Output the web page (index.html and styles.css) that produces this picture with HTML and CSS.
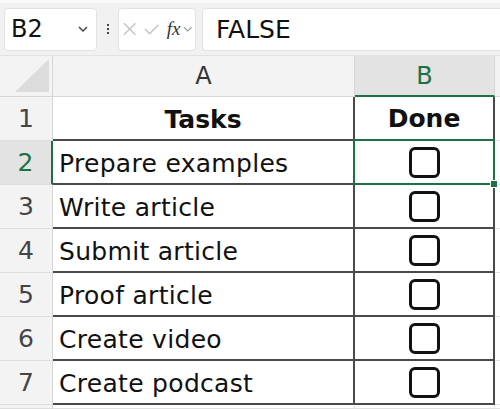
FILE: index.html
```html
<!DOCTYPE html>
<html lang="en">
<head>
  <meta charset="UTF-8">
  <title>Tasks sheet</title>
  <link rel="stylesheet" href="styles.css">
</head>
<body>
  <div class="toolbar">
    <div class="name-box">
      <span>B2</span>
      <svg class="chev" width="12" height="8" viewBox="0 0 12 8"><path d="M2 2 L6 6 L10 2" fill="none" stroke="#444" stroke-width="1.5"/></svg>
    </div>
    <div class="dots"><i></i><i></i><i></i></div>
    <div class="fx-box">
      <svg width="14" height="14" viewBox="0 0 14 14"><path d="M1 1 L13 13 M13 1 L1 13" stroke="#c4c4c4" stroke-width="1.5"/></svg>
      <svg width="16" height="13" viewBox="0 0 16 13"><path d="M1 6 L6 11 L15 1.5" fill="none" stroke="#c4c4c4" stroke-width="1.5"/></svg>
      <span class="fx">fx</span>
      <svg width="10" height="8" viewBox="0 0 10 8"><path d="M1 2 L5 6 L9 2" fill="none" stroke="#999" stroke-width="1.3"/></svg>
    </div>
    <div class="formula">FALSE</div>
  </div>

  <div class="sheet">
    <div class="corner"><span class="tri"></span></div>
    <div class="col-head">A</div>
    <div class="col-head active">B</div>
    <div class="col-rest"></div>

    <div class="row-head">1</div>
    <div class="cell title">Tasks</div>
    <div class="cell center title">Done</div>
    <div class="rest"></div>

    <div class="row-head active">2</div>
    <div class="cell">Prepare examples</div>
    <div class="cell center selected"><span class="box"></span><span class="handle"></span></div>
    <div class="rest"></div>

    <div class="row-head">3</div>
    <div class="cell">Write article</div>
    <div class="cell center"><span class="box"></span></div>
    <div class="rest"></div>

    <div class="row-head">4</div>
    <div class="cell">Submit article</div>
    <div class="cell center"><span class="box"></span></div>
    <div class="rest"></div>

    <div class="row-head">5</div>
    <div class="cell">Proof article</div>
    <div class="cell center"><span class="box"></span></div>
    <div class="rest"></div>

    <div class="row-head">6</div>
    <div class="cell">Create video</div>
    <div class="cell center"><span class="box"></span></div>
    <div class="rest"></div>

    <div class="row-head">7</div>
    <div class="cell">Create podcast</div>
    <div class="cell center"><span class="box"></span></div>
    <div class="rest"></div>

    <div class="row-head"></div>
    <div class="cell empty"></div>
    <div class="cell empty"></div>
    <div class="rest"></div>
  </div>
</body>
</html>
```

FILE: styles.css
```css
body {
  margin: 0;
  padding: 0;
  height: 409px;
  background-color: #ffffff;
  font-family: "DejaVu Sans", "Noto Sans", sans-serif;
  color: #111;
  overflow: hidden;
}

/* Barra de fórmulas */
.toolbar {
  display: flex;
  align-items: center;
  height: 56px;
  padding: 0 0 0 4px;
  box-sizing: border-box;
  background-color: #f1f1f1;
  border-top: 3px solid #fafafa;
  border-bottom: 1px solid #e2e2e2;
}

.name-box {
  display: flex;
  align-items: center;
  justify-content: space-between;
  width: 93px;
  height: 43px;
  box-sizing: border-box;
  padding: 0 7px 0 6px;
  background-color: #fff;
  border: 1px solid #e2e2e2;
  border-radius: 4px;
  font-size: 24px;
}

.dots {
  display: flex;
  flex-direction: column;
  gap: 2px;
  width: 21px;
  align-items: center;
}

.dots i {
  width: 2px;
  height: 2px;
  background-color: #444;
}

.fx-box {
  display: flex;
  align-items: center;
  gap: 8px;
  width: 78px;
  height: 43px;
  box-sizing: border-box;
  padding: 0 2px 0 4px;
  background-color: #fff;
  border: 1px solid #e2e2e2;
  border-radius: 4px;
}

.fx {
  font-family: "Liberation Serif", serif;
  font-style: italic;
  font-size: 19px;
  color: #333;
  margin-left: -1px;
  margin-right: -5px;
}

.formula {
  flex: 1;
  height: 43px;
  margin-left: 6px;
  box-sizing: border-box;
  padding: 6px 13px;
  background-color: #fff;
  border: 1px solid #e2e2e2;
  border-right: none;
  border-radius: 4px 0 0 4px;
  font-size: 25px;
  line-height: 29px;
}

/* Planilha */
.sheet {
  display: grid;
  grid-template-columns: 53px 302px 140px 1fr;
  grid-template-rows: 41px repeat(7, 44px) 4px;
  background-color: #fff;
}

.corner {
  position: relative;
  background-color: #f3f3f3;
  border-right: 1px solid #d6d6d6;
  border-bottom: 1px solid #d6d6d6;
}

.corner .tri {
  position: absolute;
  right: 3px;
  bottom: 4px;
  width: 0;
  height: 0;
  border-left: 34px solid transparent;
  border-bottom: 33px solid #dcdcdc;
}

.col-head {
  display: flex;
  align-items: center;
  justify-content: center;
  background-color: #f3f3f3;
  border-right: 1px solid #d6d6d6;
  border-bottom: 1px solid #d6d6d6;
  font-size: 24px;
  color: #333;
}

.col-head.active {
  background-color: #e3e3e3;
  color: #1e7145;
  border-bottom: 2px solid #1e7145;
}

.col-rest {
  background-color: #f3f3f3;
  border-bottom: 1px solid #d6d6d6;
}

.row-head {
  display: flex;
  align-items: center;
  justify-content: center;
  background-color: #f3f3f3;
  border-right: 1px solid #d6d6d6;
  border-bottom: 1px solid #dedede;
  font-size: 25px;
  color: #444;
}

.row-head.active {
  background-color: #e3e3e3;
  color: #1e7145;
  border-right: 2px solid #1e7145;
}

.cell {
  display: flex;
  align-items: center;
  padding: 2px 6px 0;
  border-right: 2px solid #4a4a4a;
  border-bottom: 2px solid #4a4a4a;
  font-size: 25px;
  letter-spacing: 0.3px;
  white-space: nowrap;
}

.cell.center {
  justify-content: center;
  padding: 0;
}

.cell.title {
  justify-content: center;
  font-weight: 700;
  letter-spacing: 0;
}

.cell.empty {
  border-color: #e2e2e2;
  border-width: 1px;
}

.rest {
  border-bottom: 1px solid #e2e2e2;
}

.cell.selected {
  position: relative;
  border: 2px solid #1e7145;
  margin: -2px 0 0 -2px;
}

.handle {
  position: absolute;
  right: -5px;
  bottom: -5px;
  width: 6px;
  height: 6px;
  background-color: #1e7145;
  border: 1px solid #fff;
}

.box {
  width: 25px;
  height: 25px;
  border: 3px solid #111;
  border-radius: 6px;
}
```
